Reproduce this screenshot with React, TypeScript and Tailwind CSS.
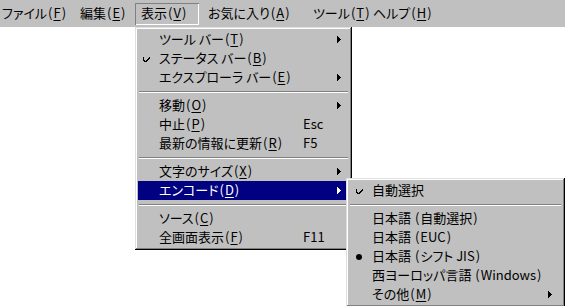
import React from "react";

type Item =
  | { sep: true }
  | {
      sep?: false;
      text: string;
      key?: string;
      shortcut?: string;
      sub?: boolean;
      mark?: "check" | "dot";
      active?: boolean;
    };

const bar = [
  { text: "ファイル", key: "F", cls: "w-[74px] pl-[2px]" },
  { text: "編集", key: "E", cls: "w-[61px] pl-[6px]" },
  { text: "表示", key: "V", cls: "w-[64px] pl-[6px]", open: true },
  { text: "お気に入り", key: "A", cls: "w-[107px] pl-[9px]" },
  { text: "ツール", key: "T", cls: "w-[61px] pl-[7px]" },
  { text: "ヘルプ", key: "H", cls: "w-[74px] pl-[6px]" },
];

const viewMenu: Item[] = [
  { text: "ツール バー", key: "T", sub: true },
  { text: "ステータス バー", key: "B", mark: "check" },
  { text: "エクスプローラ バー", key: "E", sub: true },
  { sep: true },
  { text: "移動", key: "O", sub: true },
  { text: "中止", key: "P", shortcut: "Esc" },
  { text: "最新の情報に更新", key: "R", shortcut: "F5" },
  { sep: true },
  { text: "文字のサイズ", key: "X", sub: true },
  { text: "エンコード", key: "D", sub: true, active: true },
  { sep: true },
  { text: "ソース", key: "C" },
  { text: "全画面表示", key: "F", shortcut: "F11" },
];

const encMenu: Item[] = [
  { text: "自動選択", mark: "check" },
  { sep: true },
  { text: "日本語 (自動選択)" },
  { text: "日本語 (EUC)" },
  { text: "日本語 (シフト JIS)", mark: "dot" },
  { text: "西ヨーロッパ言語 (Windows)" },
  { text: "その他", key: "M", sub: true },
];

// parentheses in the old UI font are wider than in Noto
const Paren = ({ c }: { c: string }) => <span className="mx-[1px]">{c}</span>;

const withParens = (s: string) =>
  s.split(/([()])/).map((p, i) => (p === "(" || p === ")" ? <Paren key={i} c={p} /> : p));

const Label = ({ text, k }: { text: string; k?: string }) => (
  <span className="whitespace-nowrap">
    {withParens(text)}
    {k && (
      <>
        <Paren c="(" />
        <u className="underline-offset-[2px]">{k}</u>
        <Paren c=")" />
      </>
    )}
  </span>
);

const Check = ({ color }: { color: string }) => (
  <svg width="7" height="7" viewBox="0 0 7 7" shapeRendering="crispEdges">
    <path d="M0 2h1v3h1v1h1v-1h1v-1h1v-1h1v-1h1v2h-1v1h-1v1h-1v1h-1v1h-1v-1h-1v-1h-1z" fill={color} />
  </svg>
);

const Arrow = ({ color }: { color: string }) => (
  <svg width="4" height="7" viewBox="0 0 4 7" shapeRendering="crispEdges">
    <path d="M0 0L4 3.5L0 7z" fill={color} />
  </svg>
);

const Separator = () => (
  <div className="h-[9px] flex flex-col justify-center px-[1px]">
    <div className="h-px bg-[#808080]" />
    <div className="h-px bg-white" />
  </div>
);

const Menu = ({ items, cols, markCls }: { items: Item[]; cols: string; markCls: string }) => (
  <div className="p-[3px] bg-[#c0c0c0] shadow-[inset_-1px_-1px_0_#000,inset_1px_1px_0_#dfdfdf,inset_-2px_-2px_0_#808080,inset_2px_2px_0_#fff]">
    {items.map((it, i) => {
      if (it.sep) return <Separator key={i} />;
      const fg = it.active ? "#fff" : "#000";
      return (
        <div
          key={i}
          className={`grid ${cols} h-[19px] pb-[2px] items-center ${it.active ? "bg-[#000080] text-white" : "text-black"}`}
        >
          <div className={`flex items-center pt-[2px] ${markCls}`}>
            {it.mark === "check" && <Check color={fg} />}
            {it.mark === "dot" && <div className="size-[6px] rounded-full bg-black" />}
          </div>
          <Label text={it.text} k={it.key} />
          <span className="whitespace-nowrap">{it.shortcut ?? ""}</span>
          <div className="flex items-center pt-[2px]">{it.sub && <Arrow color={fg} />}</div>
        </div>
      );
    })}
  </div>
);

export default function App() {
  return (
    <div className="relative w-[565px] h-[306px] bg-white overflow-hidden text-[13px] leading-[17px] font-['Noto_Sans_CJK_JP',sans-serif] [font-feature-settings:'palt'] select-none">
      {/* menu bar */}
      <div className="flex h-[27px] bg-[#c0c0c0]">
        {bar.map((b) => (
          <div
            key={b.text}
            className={`${b.cls} mt-[3px] h-[22px] pb-[3px] flex items-center ${
              b.open ? "shadow-[inset_1px_1px_0_#808080,inset_-1px_-1px_0_#fff]" : ""
            }`}
          >
            <Label text={b.text} k={b.key} />
          </div>
        ))}
      </div>

      {/* 表示 dropdown */}
      <div className="absolute left-[135px] top-[27px] w-[217px]">
        <Menu items={viewMenu} cols="grid-cols-[21px_144px_1fr_12px]" markCls="pl-[5px]" />
      </div>

      {/* エンコード submenu */}
      <div className="absolute left-[346px] top-[178px] w-[219px]">
        <Menu items={encMenu} cols="grid-cols-[23px_176px_0px_14px]" markCls="pl-[7px]" />
      </div>
    </div>
  );
}
